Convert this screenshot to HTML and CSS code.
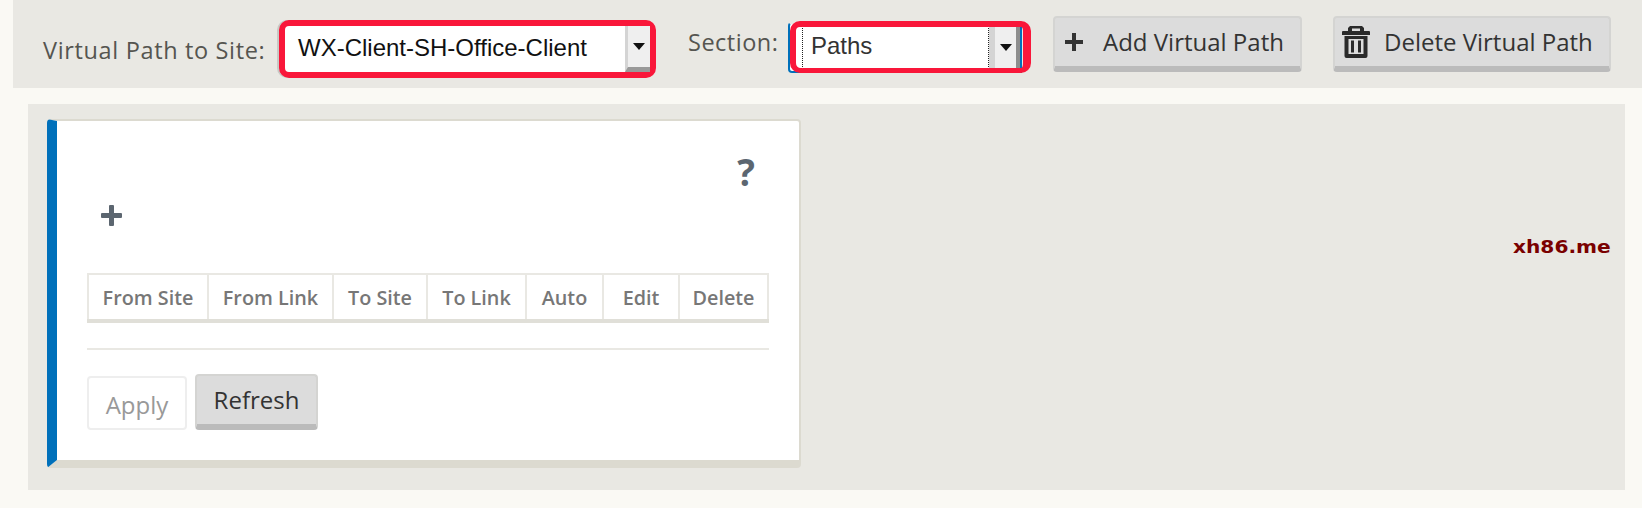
FILE: index.html
```html
<!DOCTYPE html>
<html lang="en">
<head>
<meta charset="utf-8">
<title>Virtual Paths</title>
<link rel="stylesheet" href="styles.css">
</head>
<body>
<header class="toolbar">
  <span class="label label-site">Virtual Path to Site:</span>
  <div class="select-site">
    <span class="select-value">WX-Client-SH-Office-Client</span>
    <span class="select-arrow"><i class="caret"></i></span>
  </div>
  <span class="label label-section">Section:</span>
  <div class="select-section">
    <span class="section-value">Paths</span>
    <span class="section-arrow"><i class="caret"></i></span>
    <span class="annotation"></span>
  </div>
  <button class="btn btn-add" type="button">
    <svg class="icon-plus" viewBox="0 0 20 20" aria-hidden="true"><path d="M8 1h4v7h7v4h-7v7H8v-7H1V8h7z"/></svg>
    <span>Add Virtual Path</span>
  </button>
  <button class="btn btn-delete" type="button">
    <svg class="icon-trash" viewBox="0 0 28 32" aria-hidden="true"><path fill-rule="evenodd" d="M8 0h12l2 2v3h5q1 0 1 1v3H0V6q0-1 1-1h5V2zM10 2.500V5h8V2.500zM2.500 10h23v20q0 2-2 2h-19q-2 0-2-2zM6.500 13v15h15V13zM9 14.500h3v12H9zM16 14.500h3v12h-3z"/></svg>
    <span>Delete Virtual Path</span>
  </button>
</header>
<main class="panel">
  <section class="card">
    <div class="card-help">?</div>
    <svg class="card-plus" viewBox="0 0 21 21" aria-hidden="true"><path d="M8 1q0-1 1-1h3q1 0 1 1v7h7q1 0 1 1v3q0 1-1 1h-7v7q0 1-1 1H9q-1 0-1-1v-7H1q-1 0-1-1V9q0-1 1-1h7z"/></svg>
    <table class="paths">
      <thead>
        <tr>
          <th class="col-from-site">From Site</th>
          <th class="col-from-link">From Link</th>
          <th class="col-to-site">To Site</th>
          <th class="col-to-link">To Link</th>
          <th class="col-auto">Auto</th>
          <th class="col-edit">Edit</th>
          <th class="col-delete">Delete</th>
        </tr>
      </thead>
    </table>
    <hr class="divider">
    <div class="actions">
      <button class="btn-apply" type="button">Apply</button>
      <button class="btn-refresh" type="button">Refresh</button>
    </div>
  </section>
  <div class="watermark">xh86.me</div>
</main>
</body>
</html>
```
FILE: styles.css
```css
* { box-sizing: border-box; }
html, body { margin: 0; padding: 0; }
body {
  width: 1642px;
  height: 508px;
  background: #faf9f4;
  font-family: "Open Sans", sans-serif;
  overflow: hidden;
}
.toolbar {
  display: flex;
  align-items: flex-start;
  height: 88px;
  margin-left: 13px;
  padding-left: 30px;
  background: #e9e8e3;
}
.label {
  color: #555550;
  font-size: 23.500px;
  line-height: 28px;
  white-space: nowrap;
}
.label-site { width: 236px; margin-top: 36px; letter-spacing: 0.65px; }
.label-section { width: 100px; margin-top: 28px; margin-left: 32px; letter-spacing: 0.5px; }
.select-site {
  display: flex;
  width: 377px;
  height: 58px;
  margin-top: 20px;
  border: 6px solid #f9173a;
  border-radius: 10px;
  background: #fff;
  box-shadow: -2px 0 0 #c9c9c5;
}
.select-value {
  flex: 1;
  padding-left: 13px;
  color: #111;
  font: 24px/44px "Liberation Sans", Arial, sans-serif;
  white-space: nowrap;
}
.select-arrow {
  display: flex;
  align-items: center;
  justify-content: center;
  width: 25px;
  background: #efefef;
  border-left: 3px solid #d4d4d4;
  border-bottom: 5px solid #999;
}
.caret {
  display: block;
  width: 0;
  height: 0;
  border-left: 6px solid transparent;
  border-right: 6px solid transparent;
  border-top: 7px solid #111;
}
.select-section {
  position: relative;
  display: flex;
  width: 234px;
  height: 51px;
  margin-top: 22px;
  background: #fff;
  border: 2px solid #0070ba;
  border-top-color: #e9e8e3;
  border-radius: 4px 0 0 4px;
}
.section-value {
  width: 187px;
  margin-left: 12px;
  padding-left: 8px;
  color: #333;
  font: 24px/44px "Liberation Sans", Arial, sans-serif;
  border-left: 1px dotted #222;
  border-right: 1px dotted #222;
}
.section-arrow {
  display: flex;
  align-items: center;
  justify-content: center;
  width: 31px;
  background: #efefef;
  border-left: 6px solid #d4d4d4;
  border-right: 4px solid #8d8d8d;
}
.annotation {
  position: absolute;
  left: 0;
  top: -3px;
  width: 241px;
  height: 52px;
  border: solid #f9173a;
  border-width: 6px 8px 5px 6px;
  border-radius: 10px;
  pointer-events: none;
}
.btn {
  display: flex;
  align-items: center;
  height: 56px;
  margin-top: 16px;
  padding: 0;
  background: #dcdcdc;
  border: 2px solid #d4d4d2;
  border-bottom: 6px solid #bbb;
  border-radius: 4px;
  color: #333;
  font: 24px/28px "Open Sans", sans-serif;
  white-space: nowrap;
}
.btn-add { width: 249px; margin-left: 31px; }
.btn-delete { width: 278px; margin-left: 31px; }
.icon-plus { width: 20px; height: 20px; margin: 0 19px 0 9px; fill: #333; }
.icon-trash { width: 28px; height: 32px; margin: 0 14px 0 7px; fill: #2a2a2a; }
.panel {
  display: flex;
  align-items: flex-start;
  width: 1597px;
  height: 386px;
  margin: 16px 0 0 28px;
  padding: 15px 0 0 19px;
  background: #e9e8e3;
}
.card {
  position: relative;
  width: 754px;
  height: 349px;
  padding: 0 0 0 30px;
  background: #fff;
  border: solid #dcdad0;
  border-width: 2px 2px 8px 10px;
  border-left-color: #0070ba;
  border-radius: 4px;
}
.card-help {
  position: absolute;
  right: 44px;
  top: 26px;
  color: #5c6670;
  font: 700 37px/50px "Open Sans", sans-serif;
}
.card-plus {
  display: block;
  width: 21px;
  height: 21px;
  margin: 84px 0 0 14px;
  fill: #5c6670;
}
.paths {
  width: 680px;
  margin-top: 47px;
  border-collapse: collapse;
  table-layout: fixed;
  border-bottom: 4px solid #e0dfd8;
}
.paths th {
  height: 47px;
  padding: 0;
  border: 2px solid #e9e8e3;
  border-bottom: 0;
  color: #777;
  font-size: 19.800px;
  font-weight: 600;
  text-align: center;
  white-space: nowrap;
}
.col-from-site { width: 120px; }
.col-from-link { width: 125px; }
.col-to-site { width: 94px; }
.col-to-link { width: 99px; }
.col-auto { width: 77px; }
.col-edit { width: 76px; }
.col-delete { width: 89px; }
.divider {
  width: 682px;
  height: 2px;
  margin: 25px 0 0;
  border: 0;
  background: #e9e8e3;
}
.actions {
  display: flex;
  align-items: flex-end;
  gap: 8px;
  margin-top: 24px;
}
.btn-apply {
  width: 100px;
  height: 54px;
  padding: 4px 0 0;
  background: #fff;
  border: 2px solid #eee;
  border-radius: 4px;
  color: #999;
  font: 24px/28px "Open Sans", sans-serif;
}
.btn-refresh {
  width: 123px;
  height: 56px;
  padding: 0;
  background: #dcdcdc;
  border: 2px solid #d4d4d2;
  border-bottom: 6px solid #bbb;
  border-radius: 4px;
  color: #333;
  font: 24px/28px "Open Sans", sans-serif;
}
.watermark {
  margin: 116px 0 0 712px;
  color: #7a0000;
  font: 700 18px/24px "DejaVu Sans", sans-serif;
  white-space: nowrap;
  transform: scaleX(1.12);
  transform-origin: left center;
}
```
